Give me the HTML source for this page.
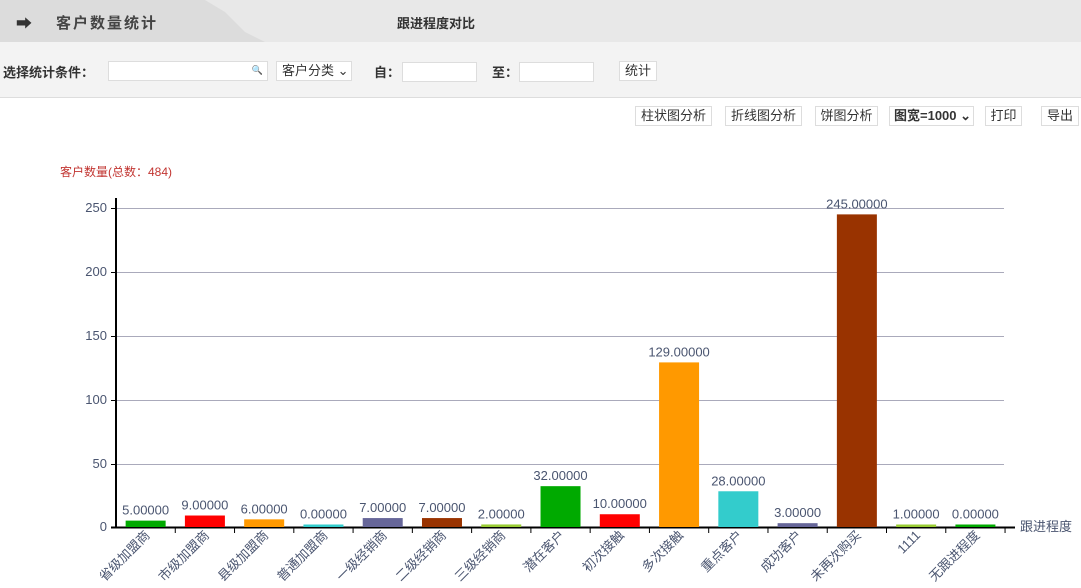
<!DOCTYPE html>
<html><head><meta charset="utf-8"><style>
*{margin:0;padding:0;box-sizing:border-box}
body{width:1081px;height:588px;overflow:hidden;background:#fff;font-family:"Liberation Sans","Noto Sans CJK SC",sans-serif;font-size:12px;color:#333;position:relative}
.top{position:absolute;left:0;top:0;width:1081px;height:42px;background:#e8e8e8}
.tab{position:absolute;left:0;top:0;height:42px;width:265px;background:#dcdcdc;clip-path:polygon(0 0,205px 0,225px 12px,245px 32px,265px 42px,0 42px)}
.abs{position:absolute;white-space:nowrap}
.filter{position:absolute;left:0;top:42px;width:1081px;height:56px;background:#f3f3f3;border-bottom:1px solid #ddd}
.inp{position:absolute;height:20px;background:#fff;border:1px solid #ddd}
.btn{position:absolute;height:20px;background:#fff;border:1px solid #ddd;font-size:13px;line-height:18px;text-align:center;color:#333}
</style></head><body>
<div class="top"><div class="tab"></div></div>
<div class="abs" style="left:16px;top:10px;font-size:16px;color:#333">➡</div>
<div class="abs" style="left:56px;top:12px;font-size:15px;font-weight:bold;letter-spacing:2px;color:#444">客户数量统计</div>
<div class="abs" style="left:397px;top:13px;font-size:13px;font-weight:bold;color:#333">跟进程度对比</div>
<div class="filter"></div>
<div class="abs" style="left:3px;top:62px;font-size:13px;font-weight:bold">选择统计条件：</div>
<div class="inp" style="left:108px;top:61px;width:160px"><span class="abs" style="right:4px;top:3px;font-size:9px;color:#aaa">🔍</span></div>
<div class="btn" style="left:276px;top:61px;width:76px;text-align:left;padding-left:5px">客户分类 ⌄</div>
<div class="abs" style="left:374px;top:62px;font-size:13px;font-weight:bold">自：</div>
<div class="inp" style="left:402px;top:62px;width:75px"></div>
<div class="abs" style="left:492px;top:62px;font-size:13px;font-weight:bold">至：</div>
<div class="inp" style="left:519px;top:62px;width:75px"></div>
<div class="btn" style="left:619px;top:61px;width:38px">统计</div>
<div class="btn" style="left:635px;top:106px;width:77px">柱状图分析</div>
<div class="btn" style="left:725px;top:106px;width:77px">折线图分析</div>
<div class="btn" style="left:815px;top:106px;width:63px">饼图分析</div>
<div class="btn" style="left:889px;top:106px;width:85px;font-weight:bold;text-align:left;padding-left:4px">图宽=1000 ⌄</div>
<div class="btn" style="left:985px;top:106px;width:37px">打印</div>
<div class="btn" style="left:1041px;top:106px;width:38px">导出</div>
<div class="abs" style="left:60px;top:163px;font-size:12px;color:#c23531">客户数量(总数：484)</div>
<svg class="abs" style="left:0;top:0" width="1081" height="588" font-family="Liberation Sans, Noto Sans CJK SC, sans-serif" font-size="13">
<g stroke="#aab" stroke-width="1">
<line x1="116" y1="208.5" x2="1004" y2="208.5"/><line x1="116" y1="272.5" x2="1004" y2="272.5"/><line x1="116" y1="336.5" x2="1004" y2="336.5"/><line x1="116" y1="400.5" x2="1004" y2="400.5"/><line x1="116" y1="464.5" x2="1004" y2="464.5"/>
</g>
<g fill="#4a5570" text-anchor="end">
<text x="107" y="212">250</text><text x="107" y="276">200</text><text x="107" y="340">150</text><text x="107" y="404">100</text><text x="107" y="468">50</text><text x="107" y="531">0</text>
</g>
<g stroke="#000"><line x1="116" y1="198" x2="116" y2="528" stroke-width="2"/><line x1="111" y1="527.5" x2="1015" y2="527.5" stroke-width="2"/>
<line x1="111" y1="464.5" x2="116" y2="464.5"/><line x1="111" y1="400.5" x2="116" y2="400.5"/><line x1="111" y1="336.5" x2="116" y2="336.5"/><line x1="111" y1="272.5" x2="116" y2="272.5"/><line x1="111" y1="208.5" x2="116" y2="208.5"/>
</g>
<text x="1020" y="531" fill="#4a5570">跟进程度</text>
<g id="bars"></g>
</svg>
<script>
var d=[["省级加盟商",5,"#0a0"],["市级加盟商",9,"#f00"],["县级加盟商",6,"#f90"],["普通加盟商",0,"#3cc"],["一级经销商",7,"#669"],["二级经销商",7,"#930"],["三级经销商",2,"#9c3"],["潜在客户",32,"#0a0"],["初次接触",10,"#f00"],["多次接触",129,"#f90"],["重点客户",28,"#3cc"],["成功客户",3,"#669"],["未再次购买",245,"#930"],["1111",1,"#9c3"],["无跟进程度",0,"#0a0"]];
var s="";
d.forEach(function(r,i){var cx=116+59.27*(i+.5),h=Math.max(2.5,r[1]*1.276),y=527-h,tx=116+59.27*(i+1);
s+='<rect x="'+(cx-20)+'" y="'+y+'" width="40" height="'+h+'" fill="'+r[2]+'"/>';
s+='<text x="'+cx+'" y="'+(y-6)+'" fill="#4a5570" text-anchor="middle">'+r[1].toFixed(5)+'</text>';
s+='<line x1="'+tx+'" y1="528" x2="'+tx+'" y2="533" stroke="#000"/>';
s+='<text transform="translate('+(cx+5)+',536) rotate(-45)" fill="#4a5570" text-anchor="end">'+r[0]+'</text>';});
document.getElementById("bars").innerHTML=s;
</script>
</body></html>
